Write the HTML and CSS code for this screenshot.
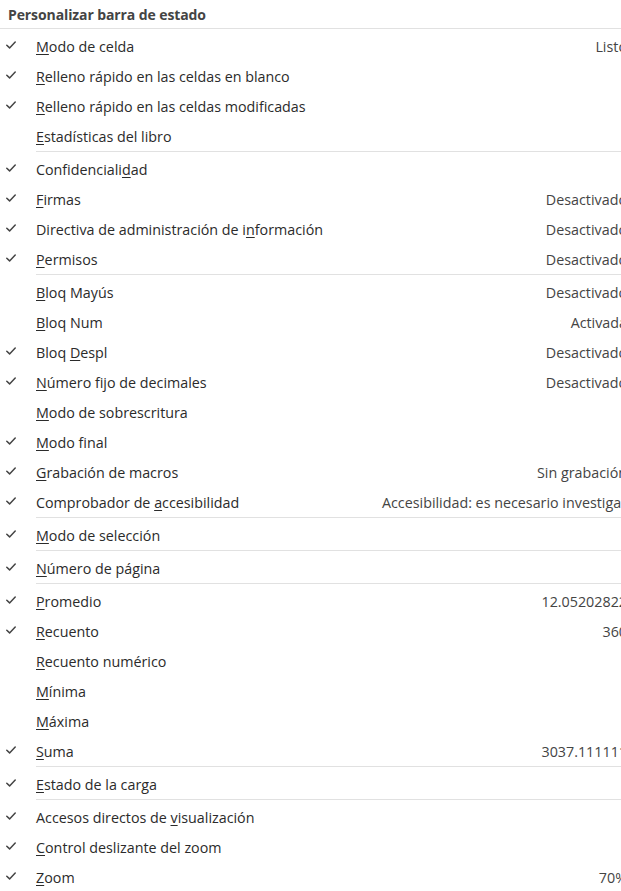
FILE: index.html
```html
<!DOCTYPE html>
<html lang="es">
<head>
<meta charset="utf-8">
<title>Personalizar barra de estado</title>
<link rel="stylesheet" href="styles.css">
</head>
<body>
<svg width="0" height="0" class="defs" aria-hidden="true">
  <symbol id="chk" viewBox="0 0 10 8">
    <polyline points="0.8,4.2 3.6,6.9 9.2,1" fill="none" stroke="currentColor" stroke-width="1.5" stroke-linecap="round" stroke-linejoin="round"/>
  </symbol>
</svg>
<div class="menu">
  <div class="title">Personalizar barra de estado</div>

  <div class="item on"><span class="check"><svg><use href="#chk"/></svg></span><span class="label"><u>M</u>odo de celda</span><span class="value">Listo</span></div>
  <div class="item on"><span class="check"><svg><use href="#chk"/></svg></span><span class="label"><u>R</u>elleno rápido en las celdas en blanco</span><span class="value"></span></div>
  <div class="item on"><span class="check"><svg><use href="#chk"/></svg></span><span class="label"><u>R</u>elleno rápido en las celdas modificadas</span><span class="value"></span></div>
  <div class="item"><span class="check"></span><span class="label"><u>E</u>stadísticas del libro</span><span class="value"></span></div>
  <div class="sep"></div>

  <div class="item on"><span class="check"><svg><use href="#chk"/></svg></span><span class="label">Confidenciali<u>d</u>ad</span><span class="value"></span></div>
  <div class="item on"><span class="check"><svg><use href="#chk"/></svg></span><span class="label"><u>F</u>irmas</span><span class="value">Desactivado</span></div>
  <div class="item on"><span class="check"><svg><use href="#chk"/></svg></span><span class="label">Directiva de administración de i<u>n</u>formación</span><span class="value">Desactivado</span></div>
  <div class="item on"><span class="check"><svg><use href="#chk"/></svg></span><span class="label"><u>P</u>ermisos</span><span class="value">Desactivado</span></div>
  <div class="sep"></div>

  <div class="item"><span class="check"></span><span class="label"><u>B</u>loq Mayús</span><span class="value">Desactivado</span></div>
  <div class="item"><span class="check"></span><span class="label"><u>B</u>loq Num</span><span class="value">Activada</span></div>
  <div class="item on"><span class="check"><svg><use href="#chk"/></svg></span><span class="label">Bloq <u>D</u>espl</span><span class="value">Desactivado</span></div>
  <div class="item on"><span class="check"><svg><use href="#chk"/></svg></span><span class="label"><u>N</u>úmero fijo de decimales</span><span class="value">Desactivado</span></div>
  <div class="item"><span class="check"></span><span class="label"><u>M</u>odo de sobrescritura</span><span class="value"></span></div>
  <div class="item on"><span class="check"><svg><use href="#chk"/></svg></span><span class="label"><u>M</u>odo final</span><span class="value"></span></div>
  <div class="item on"><span class="check"><svg><use href="#chk"/></svg></span><span class="label"><u>G</u>rabación de macros</span><span class="value">Sin grabación</span></div>
  <div class="item on"><span class="check"><svg><use href="#chk"/></svg></span><span class="label">Comprobador de <u>a</u>ccesibilidad</span><span class="value">Accesibilidad: es necesario investigar</span></div>
  <div class="sep"></div>

  <div class="item on"><span class="check"><svg><use href="#chk"/></svg></span><span class="label"><u>M</u>odo de selección</span><span class="value"></span></div>
  <div class="sep"></div>

  <div class="item on"><span class="check"><svg><use href="#chk"/></svg></span><span class="label"><u>N</u>úmero de página</span><span class="value"></span></div>
  <div class="sep"></div>

  <div class="item on"><span class="check"><svg><use href="#chk"/></svg></span><span class="label"><u>P</u>romedio</span><span class="value">12.05202822</span></div>
  <div class="item on"><span class="check"><svg><use href="#chk"/></svg></span><span class="label"><u>R</u>ecuento</span><span class="value">360</span></div>
  <div class="item"><span class="check"></span><span class="label"><u>R</u>ecuento numérico</span><span class="value"></span></div>
  <div class="item"><span class="check"></span><span class="label"><u>M</u>ínima</span><span class="value"></span></div>
  <div class="item"><span class="check"></span><span class="label"><u>M</u>áxima</span><span class="value"></span></div>
  <div class="item on"><span class="check"><svg><use href="#chk"/></svg></span><span class="label"><u>S</u>uma</span><span class="value">3037.111111</span></div>
  <div class="sep"></div>

  <div class="item on"><span class="check"><svg><use href="#chk"/></svg></span><span class="label"><u>E</u>stado de la carga</span><span class="value"></span></div>
  <div class="sep"></div>

  <div class="item on"><span class="check"><svg><use href="#chk"/></svg></span><span class="label">Accesos directos de <u>v</u>isualización</span><span class="value"></span></div>
  <div class="item on"><span class="check"><svg><use href="#chk"/></svg></span><span class="label"><u>C</u>ontrol deslizante del zoom</span><span class="value"></span></div>
  <div class="item on"><span class="check"><svg><use href="#chk"/></svg></span><span class="label"><u>Z</u>oom</span><span class="value">70%</span></div>
</div>
</body>
</html>
```
FILE: styles.css
```css
html, body {
  margin: 0;
  padding: 0;
  background: #ffffff;
  overflow: hidden;
}

.defs {
  position: absolute;
  width: 0;
  height: 0;
}

.menu {
  width: 627px;
  font-family: "Open Sans", "Noto Sans", "Liberation Sans", sans-serif;
  font-size: 14.3px;
  color: #2b2b2b;
  display: flex;
  flex-direction: column;
}

.title {
  height: 29px;
  box-sizing: border-box;
  padding: 5px 0 0 8px;
  font-weight: 700;
  font-size: 14px;
  letter-spacing: -0.1px;
  color: #444444;
  border-bottom: 1px solid #e1e1e1;
  margin-bottom: 1px;
  line-height: 20px;
}

.item {
  display: grid;
  grid-template-columns: 36px 1fr auto;
  align-items: center;
  box-sizing: border-box;
  height: 30px;
  padding-top: 4px;
  line-height: 20px;
  white-space: nowrap;
}

.check {
  display: flex;
  align-items: center;
  padding-left: 6px;
  color: #444444;
}

.check svg {
  width: 10px;
  height: 8px;
  margin-top: -5px;
}

.label u {
  text-decoration: underline;
  text-underline-offset: 2px;
  text-decoration-thickness: 1px;
}

.value {
  color: #444444;
  text-align: right;
}

.sep {
  height: 1px;
  margin: 1px 0 1px 36px;
  background: #e1e1e1;
}
```
